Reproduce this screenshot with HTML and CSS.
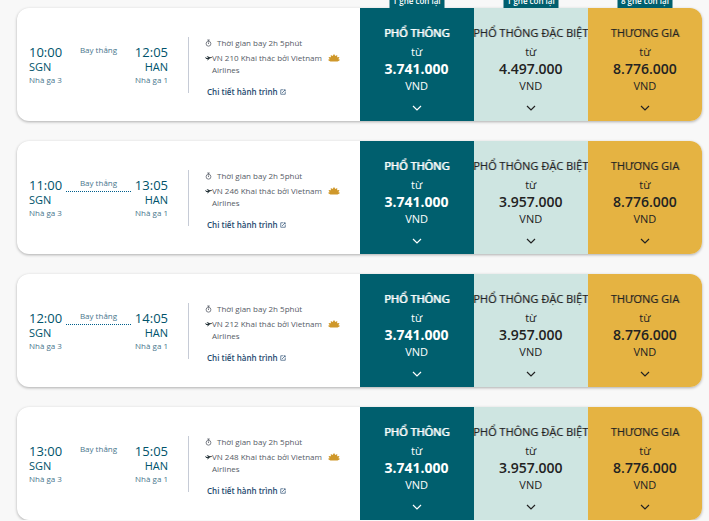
FILE: index.html
```
<!DOCTYPE html>
<html lang="vi">
<head>
<meta charset="utf-8">
<meta name="viewport" content="width=device-width, initial-scale=1">
<title>Chọn chuyến bay</title>
<link rel="stylesheet" href="styles.css">
</head>
<body>
<svg class="sprite" aria-hidden="true">
  <symbol id="timer" viewBox="0 0 14 16"><circle cx="7" cy="9.500" r="4.800" fill="none" stroke="currentColor" stroke-width="1.500"/><path d="M4.500 2h5M7 2v3M7 7v3" fill="none" stroke="currentColor" stroke-width="1.600"/></symbol>
  <symbol id="plane" viewBox="0 0 14 12"><path d="M0 4.500h1.500L3.500 6l3-.6L3 2.500h2l5 2 2.500-.7c1.800-.2 2 1 .5 1.600L9.500 7 5.500 10.500H3.800L6 7.800 2.500 8z" fill="currentColor"/></symbol>
  <symbol id="lotus" viewBox="0 0 24 16"><path d="M12 0l2.700 4L18.500 2l-.3 4.500L23 6l-2.300 4.500 3.300.8c-1.500 2.200-4 3.700-7 3.700H7c-3 0-5.500-1.500-7-3.700l3.300-.8L1 6l4.800.5L5.500 2l3.800 2z" fill="currentColor"/></symbol>
  <symbol id="open" viewBox="0 0 12 12"><path d="M6 1.500H1.500v9h9V6M4 8l6-6M7 1.500h3.500V5" fill="none" stroke="currentColor" stroke-width="1.300"/></symbol>
  <symbol id="chevron" viewBox="0 0 10 6"><path d="M1 1l4 4 4-4" fill="none" stroke="currentColor" stroke-width="1.200"/></symbol>
</svg>
<main class="flights" id="flights"></main>
<script src="flights.js"></script>
</body>
</html>
```
FILE: styles.css
```
* {
  box-sizing: border-box;
}

body {
  margin: 0;
  background: #f8f8f8;
  font-family: "Open Sans", "Noto Sans", sans-serif;
  color: #005f6e;
  overflow: hidden;
}

.sprite {
  position: absolute;
  width: 0;
  height: 0;
}

.icon {
  display: block;
  flex: none;
}

.flights {
  display: flex;
  flex-direction: column;
  gap: 20px;
  padding: 8px 7px 0 17px;
}

.card {
  display: grid;
  grid-template-columns: minmax(0, 3fr) repeat(3, minmax(0, 1fr));
  min-height: 113px;
  border-radius: 12px;
  background: #fff;
  box-shadow: 0 1px 3px rgba(0, 0, 0, 0.3);
}

.summary {
  display: flex;
  align-items: center;
  padding-left: 12px;
}

.route {
  display: grid;
  grid-template-columns: auto 1fr auto;
  flex: none;
  width: 139px;
  column-gap: 4px;
}

.stop {
  display: flex;
  flex-direction: column;
}

.stop.arrival {
  text-align: right;
}

.time {
  font-size: 13px;
  line-height: 16px;
}

.code {
  font-size: 11px;
  line-height: 14px;
}

.terminal,
.direct {
  color: #48758c;
  font-size: 8px;
  line-height: 12px;
}

.time,
.code {
  color: #00536b;
}

.direct {
  align-self: start;
  height: 15px;
  text-align: center;
}

.direct.dotted {
  border-bottom: 1px dotted #005f8c;
}

.details {
  display: flex;
  flex-direction: column;
  flex: 1;
  margin-left: 20px;
  padding-left: 16px;
  border-left: 1px solid #c6cbd6;
  color: #555b66;
  font-size: 8px;
  line-height: 12px;
}

.duration,
.operator,
.more {
  display: flex;
}

.duration {
  align-items: center;
  gap: 5px;
}

.operator {
  margin-top: 3px;
}

.operator .plane {
  margin-top: 3px;
  color: #26343a;
}

.airline {
  width: 116px;
}

.lotus {
  margin-top: 2px;
  color: #cf982b;
}

.more {
  align-items: center;
  align-self: flex-start;
  gap: 2px;
  margin: 10px 0 -5px 2px;
  color: #24496e;
  font-weight: 600;
  text-decoration: none;
}

.fare {
  position: relative;
  display: flex;
  flex-direction: column;
  align-items: center;
  margin: 0;
  padding: 17px 0 0;
  border: 0;
  font: inherit;
  font-size: 11px;
  line-height: 16px;
  white-space: nowrap;
  cursor: pointer;
}

.economy {
  background: #005f6e;
  color: #fff;
}

.premium {
  background: #cee5e1;
  color: #222;
}

.business {
  border-radius: 0 12px 12px 0;
  background: #e5b342;
  color: #222;
}

.name {
  margin-bottom: 3px;
  text-shadow: 1px 0 rgba(34, 34, 34, 0.3);
}

.economy .name {
  text-shadow: 1px 0 rgba(255, 255, 255, 0.9);
}

.price {
  font-size: 14px;
  font-weight: 600;
  line-height: 18px;
}

.economy .price {
  font-weight: 700;
}

.fare .icon {
  margin-top: 11px;
}

.seats {
  position: absolute;
  bottom: 100%;
  left: 50%;
  width: 55px;
  transform: translateX(-50%);
  background: #005f6e;
  color: #fff;
  font-size: 8px;
  font-weight: 600;
  line-height: 15px;
}
```
FILE: flights.js
```
const flights = [
  { number: "VN 210", depart: "10:00", arrive: "12:05", dotted: false, prices: ["3.741.000", "4.497.000", "8.776.000"], seats: [1, 1, 8] },
  { number: "VN 246", depart: "11:00", arrive: "13:05", dotted: true, prices: ["3.741.000", "3.957.000", "8.776.000"] },
  { number: "VN 212", depart: "12:00", arrive: "14:05", dotted: true, prices: ["3.741.000", "3.957.000", "8.776.000"] },
  { number: "VN 248", depart: "13:00", arrive: "15:05", dotted: false, prices: ["3.741.000", "3.957.000", "8.776.000"] }
];

const cabins = [
  ["economy", "PHỔ THÔNG"],
  ["premium", "PHỔ THÔNG ĐẶC BIỆT"],
  ["business", "THƯƠNG GIA"]
];

const icon = (id, width, height) =>
  `<svg class="icon ${id}" width="${width}" height="${height}" aria-hidden="true"><use href="#${id}"/></svg>`;

const fare = (flight, [type, name], i) => `
  <button type="button" class="fare ${type}">
    ${flight.seats ? `<span class="seats">${flight.seats[i]} ghế còn lại</span>` : ""}
    <span class="name">${name}</span>
    <span>từ</span>
    <span class="price">${flight.prices[i]}</span>
    <span>VND</span>
    ${icon("chevron", 10, 6)}
  </button>`;

document.getElementById("flights").innerHTML = flights.map(f => `
  <article class="card">
    <div class="summary">
      <div class="route">
        <div class="stop">
          <span class="time">${f.depart}</span><span class="code">SGN</span><span class="terminal">Nhà ga 3</span>
        </div>
        <div class="direct${f.dotted ? " dotted" : ""}">Bay thẳng</div>
        <div class="stop arrival">
          <span class="time">${f.arrive}</span><span class="code">HAN</span><span class="terminal">Nhà ga 1</span>
        </div>
      </div>
      <div class="details">
        <div class="duration">${icon("timer", 7, 8)}<span>Thời gian bay 2h 5phút</span></div>
        <div class="operator">${icon("plane", 7, 6)}<span class="airline">${f.number} Khai thác bởi Vietnam Airlines</span>${icon("lotus", 12, 8)}</div>
        <a class="more" href="#">Chi tiết hành trình${icon("open", 6, 6)}</a>
      </div>
    </div>
    ${cabins.map((c, i) => fare(f, c, i)).join("")}
  </article>`).join("");
```
